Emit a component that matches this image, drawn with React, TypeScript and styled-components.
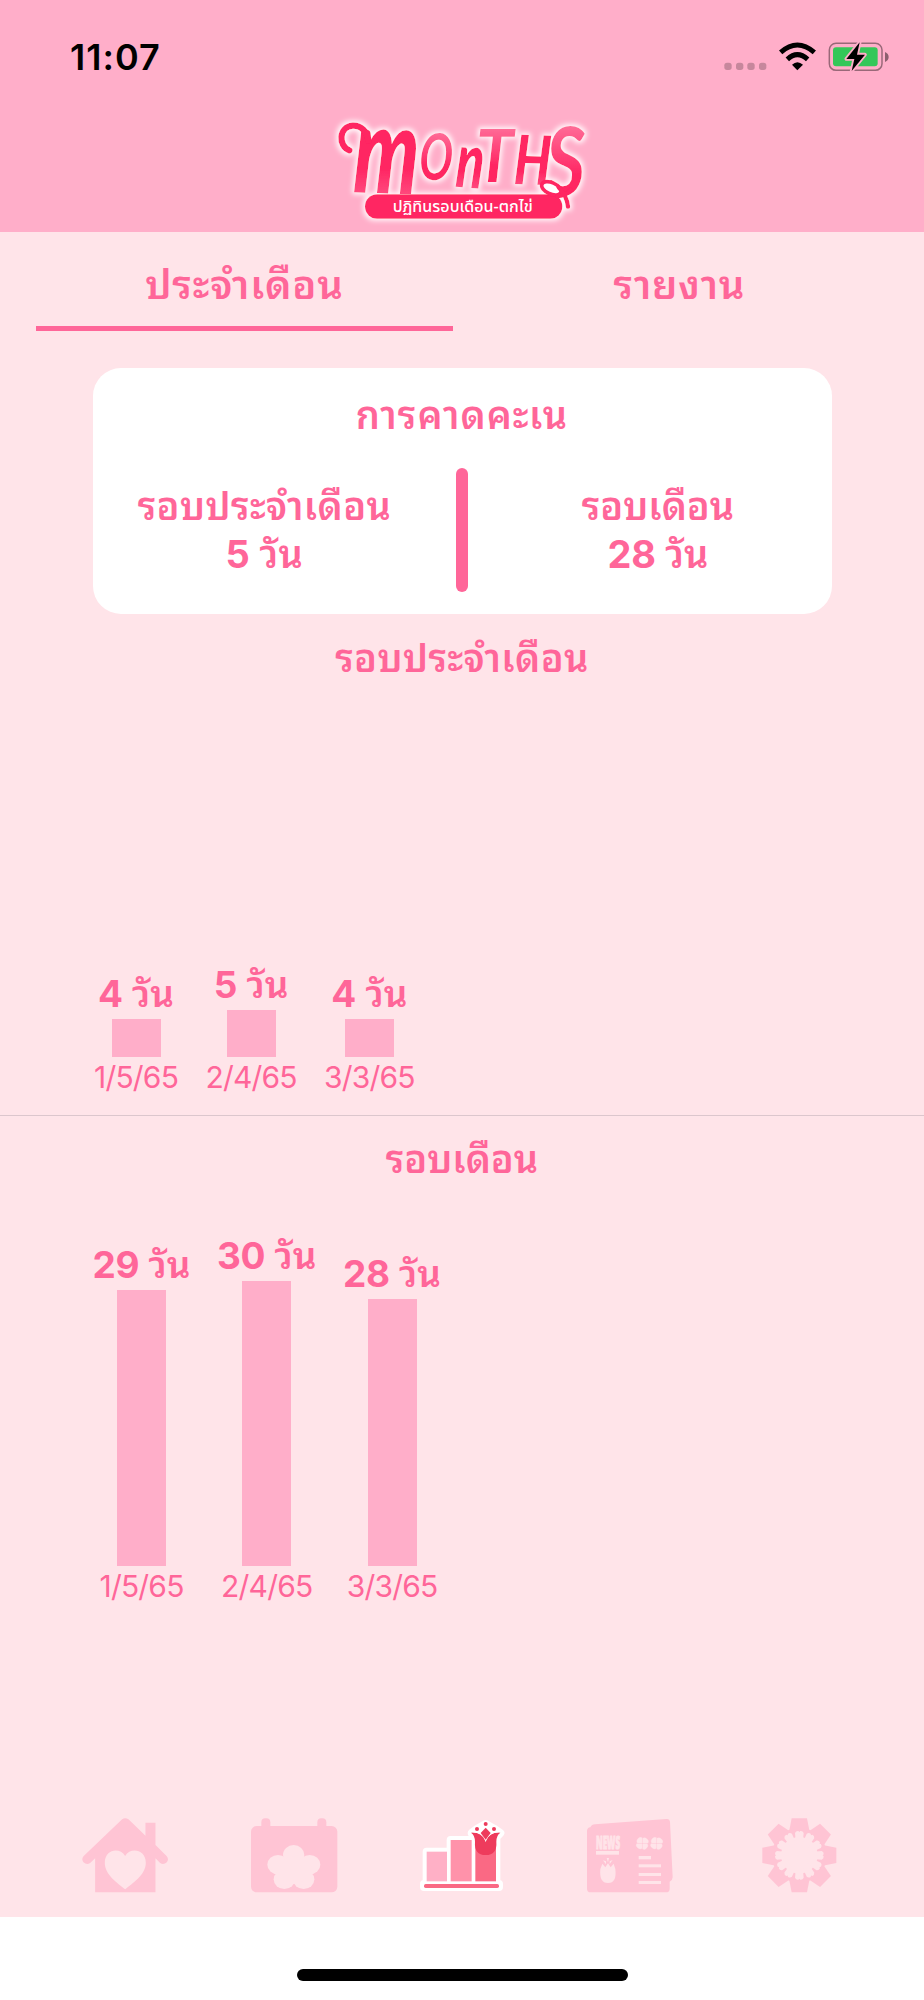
import React from "react";
import styled, { createGlobalStyle } from "styled-components";

const GlobalStyle = createGlobalStyle`
  *, *::before, *::after { box-sizing: border-box; }
  body { margin: 0; background: #fff; }
`;

const rose = "#ff6699";
const blush = "#ffaec9";
const mist = "#ffe4e9";
const muted = "#ffc4d4";

const Screen = styled.div`
  width: 924px;
  height: 2000px;
  display: flex;
  flex-direction: column;
  overflow: hidden;
  background: ${mist};
  color: ${rose};
  font-family: Inter, "Noto Sans Thai Looped", Loma, Garuda, Waree, Sarabun, Umpush, Laksaman, Kinnari, FreeSans, FreeSerif, "Noto Serif Thai", sans-serif;
  font-weight: 600;
`;

const Header = styled.header`
  height: 232px;
  flex: none;
  display: flex;
  flex-direction: column;
  align-items: center;
  background: ${blush};
`;

const StatusBar = styled.div`
  width: 100%;
  height: 110px;
  padding: 35px 35px 0 70px;
  display: flex;
  justify-content: space-between;
  align-items: flex-start;
  color: #000;
`;

const Clock = styled.span`
  font-size: 36px;
  line-height: 44px;
  letter-spacing: 1px;
`;

const Tabs = styled.nav`
  flex: none;
  display: grid;
  grid-template-columns: 1fr 1fr;
  gap: 18px;
  padding: 0 36px;
`;

const Tab = styled.div<{ $active?: boolean }>`
  height: 99px;
  padding-top: 29px;
  border-bottom: 5px solid ${(p) => (p.$active ? rose : "transparent")};
  text-align: center;
  font-size: 40px;
  line-height: 48px;
  letter-spacing: 0.8px;
`;

const Card = styled.section`
  flex: none;
  width: 739px;
  height: 246px;
  margin: 37px 0 0 93px;
  padding: 23px 1px 0 0;
  border-radius: 28px;
  background: #fff;
  text-align: center;
`;

const Title = styled.h2<{ $track?: number }>`
  margin: 0;
  font-size: 38px;
  font-weight: 600;
  line-height: 48px;
  text-align: center;
  letter-spacing: ${(p) => p.$track ?? 0}px;
`;

const Forecast = styled.div`
  margin-top: 29px;
  display: grid;
  grid-template-columns: 1fr 12px 1fr;
  align-items: center;
`;

const Divider = styled.div`
  height: 124px;
  border-radius: 6px;
  background: ${rose};
`;

const Stat = styled.div<{ $side: "left" | "right" }>`
  padding: ${(p) => (p.$side === "left" ? "0 20px 0 0" : "0 0 0 17px")};
  font-size: 38px;
  line-height: 48px;
  letter-spacing: ${(p) => (p.$side === "left" ? 0.4 : 0)}px;
`;

const Digits = styled.b`
  font-weight: 700;
  letter-spacing: -0.3px;
`;

const Section = styled.section<{ $height: number; $top: number; $line?: boolean }>`
  flex: none;
  height: ${(p) => p.$height}px;
  padding-top: ${(p) => p.$top}px;
  display: flex;
  flex-direction: column;
  border-bottom: ${(p) => (p.$line ? "1px solid #dcc6cd" : "none")};
`;

const Chart = styled.div<{ $height: number; $left: number; $gap: number }>`
  height: ${(p) => p.$height}px;
  padding-left: ${(p) => p.$left}px;
  display: flex;
  gap: ${(p) => p.$gap}px;
  align-items: flex-end;
`;

const Column = styled.div`
  display: flex;
  flex-direction: column;
  align-items: center;
  white-space: nowrap;
`;

const Amount = styled.span`
  margin-bottom: 3px;
  font-size: 37px;
  line-height: 44px;
`;

const Bar = styled.div`
  width: 49px;
  background: ${blush};
`;

const DateLabel = styled.span`
  margin-top: 2px;
  font-size: 30px;
  font-weight: 400;
  line-height: 36px;
  letter-spacing: -0.8px;
`;

const Navigation = styled.nav`
  height: 117px;
  margin-top: auto;
  flex: none;
  padding: 0 41px;
  display: grid;
  grid-template-columns: repeat(5, 1fr);
  justify-items: center;
`;

const Footer = styled.footer`
  height: 83px;
  flex: none;
  display: flex;
  justify-content: center;
  padding-top: 52px;
  background: #fff;
`;

const HomeIndicator = styled.div`
  width: 331px;
  height: 12px;
  border-radius: 6px;
  background: #000;
`;

type Entry = { days: number; date: string; height: number };

const periods: Entry[] = [
  { days: 4, date: "1/5/65", height: 38 },
  { days: 5, date: "2/4/65", height: 47 },
  { days: 4, date: "3/3/65", height: 38 },
];

const cycles: Entry[] = [
  { days: 29, date: "1/5/65", height: 276 },
  { days: 30, date: "2/4/65", height: 285 },
  { days: 28, date: "3/3/65", height: 267 },
];

const BarChart = ({ data, height, left, gap }: { data: Entry[]; height: number; left: number; gap: number }) => (
  <Chart $height={height} $left={left} $gap={gap}>
    {data.map((d) => (
      <Column key={d.date}>
        <Amount>
          <Digits>{d.days}</Digits> วัน
        </Amount>
        <Bar style={{ height: d.height }} />
        <DateLabel>{d.date}</DateLabel>
      </Column>
    ))}
  </Chart>
);

const StatusIcons = () => (
  <svg width="167" height="40" viewBox="66 45 501 120">
    <g fill="#000" opacity="0.22">
      {[73, 108, 142, 177].map((x) => (
        <rect key={x} x={x} y="128" width="22" height="22" rx="8" />
      ))}
    </g>
    <g fill="none" stroke="#000" strokeWidth="15">
      <path d="M242 97 Q292 53 343 97" />
      <path d="M262 118 Q292 90 323 118" />
    </g>
    <path d="M276 134 Q292 119 309 134 L292 151Z" />
    <rect x="388" y="70" width="158" height="81" rx="20" fill="none" stroke="#000" strokeOpacity="0.4" strokeWidth="4.5" />
    <path d="M555 96 Q566 101 566 111 Q566 121 555 126Z" opacity="0.45" />
    <rect x="399" y="82" width="134" height="57" rx="9" fill="#34c759" />
    <path d="M479 67 L439 117 H463 L455 153 L495 104 H471Z" stroke={blush} strokeWidth="11" strokeLinejoin="round" />
    <path d="M479 67 L439 117 H463 L455 153 L495 104 H471Z" />
  </svg>
);

const letters = [
  { c: "m", x: 98, y: 247, w: 196, size: 366, weight: 900, fill: "url(#deep)", turn: 2 },
  { c: "O", x: 294, y: 206, w: 100, size: 194, weight: 700, fill: "url(#soft)", turn: 4 },
  { c: "n", x: 404, y: 230, w: 84, size: 232, weight: 900, fill: "url(#deep)", turn: 4 },
  { c: "T", x: 468, y: 215, w: 112, size: 218, weight: 700, fill: "url(#soft)", turn: 0 },
  { c: "H", x: 580, y: 222, w: 112, size: 205, weight: 900, fill: "url(#deep)", turn: 2 },
  { c: "S", x: 676, y: 258, w: 120, size: 288, weight: 700, fill: "url(#soft)", turn: 0 },
];

const Wordmark = () => (
  <>
    {letters.map((l) => (
      <text
        key={l.c}
        x={l.x}
        y={l.y}
        fontSize={l.size}
        fontWeight={l.weight}
        textLength={l.w}
        lengthAdjust="spacingAndGlyphs"
        fill={l.fill}
        transform={`rotate(${l.turn} ${l.x} ${l.y})`}
      >
        {l.c}
      </text>
    ))}
  </>
);

const LogoArt = styled.svg`
  overflow: visible;
  font-family: Lato, sans-serif;
  font-style: italic;
`;

const Tagline = styled.text`
  font-family: "Noto Sans Thai", sans-serif;
  font-style: normal;
  font-weight: 500;
  fill: #fff;
`;

const Logo = () => (
  <LogoArt width="290" height="122" viewBox="-9 0 870 366">
    <defs>
      <linearGradient id="deep" x1="0" y1="0" x2="0" y2="1">
        <stop offset="0.65" stopColor="#ff2562" />
        <stop offset="1" stopColor="#ff6c98" />
      </linearGradient>
      <linearGradient id="soft" x1="0" y1="0" x2="0" y2="1">
        <stop offset="0.15" stopColor="#ff769f" />
        <stop offset="0.65" stopColor="#ff2562" />
      </linearGradient>
      <filter id="glow" x="-10%" y="-20%" width="120%" height="140%">
        <feMorphology operator="dilate" radius="6" />
        <feColorMatrix values="0 0 0 0 1  0 0 0 0 1  0 0 0 0 1  0 0 0 0.9 0" />
        <feGaussianBlur stdDeviation="8" result="halo" />
        <feMerge>
          <feMergeNode in="halo" />
          <feMergeNode in="SourceGraphic" />
        </feMerge>
      </filter>
    </defs>
    <g filter="url(#glow)">
      <Wordmark />
      <path d="M88 121 C54 108 56 50 98 47 C124 46 140 64 146 92" fill="none" stroke="#ff2562" strokeWidth="19" strokeLinecap="round" />
      <rect x="135" y="253" width="592" height="73" rx="36" fill="#ff2562" />
      <g stroke="#ff2562" strokeLinecap="round">
        <ellipse cx="694" cy="235" rx="31" ry="17" transform="rotate(24 694 235)" fill="#fff" strokeWidth="11" />
        <path d="M712 258 Q738 258 752 240 M716 232 Q740 256 744 290" fill="none" strokeWidth="13" />
      </g>
    </g>
    <Tagline x="218" y="306" fontSize="48" textLength="420" lengthAdjust="spacingAndGlyphs">
      ปฏิทินรอบเดือน-ตกไข่
    </Tagline>
  </LogoArt>
);

const HomeIcon = () => (
  <svg width="100" height="117" viewBox="45.6 0 300 351">
    <path
      fill={muted}
      d="M187 58 Q196 51 206 58 L257 107 V68 H287 V135 L321 169 Q328 178 321 187 Q311 196 301 189 L287 175 V277 H106 V175 L91 189 Q81 196 71 187 Q64 178 71 169Z"
    />
    <path fill={mist} d="M196 268 C175 250 135 225 135 188 C135 148 180 140 196 168 C212 140 258 148 258 188 C258 225 217 250 196 268Z" />
  </svg>
);

const CalendarIcon = () => (
  <svg width="100" height="117" viewBox="551 0 300 351">
    <g fill={muted}>
      <rect x="572" y="78" width="259" height="199" rx="17" />
      <rect x="603" y="55" width="27" height="40" rx="12" />
      <rect x="771" y="55" width="27" height="40" rx="12" />
    </g>
    <g fill={mist}>
      <ellipse cx="700" cy="165" rx="32" ry="30" />
      <ellipse cx="653" cy="194" rx="32" ry="29" />
      <ellipse cx="748" cy="194" rx="32" ry="29" />
      <ellipse cx="672" cy="238" rx="32" ry="29" />
      <ellipse cx="730" cy="238" rx="32" ry="29" />
      <circle cx="700" cy="210" r="42" />
    </g>
  </svg>
);

const StatsIcon = () => (
  <svg width="100" height="117" viewBox="36 0 300 351">
    <g fill="#fff" stroke="#fff" strokeWidth="24" strokeLinejoin="round">
      <path d="M80 155 H152 V120 H225 V99 L215 99 L232 86 L257 72 L282 86 L301 99 L289 112 V252 H297 V261 H72 V252 H80Z" />
    </g>
    <rect x="80" y="155" width="61" height="89" fill="#ffb0c6" />
    <rect x="152" y="120" width="63" height="124" fill="#ff92aa" />
    <rect x="226" y="110" width="62" height="134" fill="#fa6984" />
    <rect x="72" y="252" width="225" height="12" rx="5" fill="#fa6984" />
    <path d="M213 98 Q246 96 257 124 Q268 96 301 98 Q289 106 289 125 Q292 165 257 165 Q222 165 225 125 Q225 106 213 98Z" fill="#ee3b5c" />
    <path d="M213 98 Q246 96 257 124 Q268 96 301 98" fill="none" stroke="#fff" strokeWidth="4" transform="translate(0 -3)" />
    <g fill="#ee3b5c">
      <path d="M257 83 L272 99 L257 119 L242 99Z" />
      <circle cx="257" cy="72" r="6" />
      <circle cx="231" cy="87" r="6" />
      <circle cx="282" cy="87" r="6" />
    </g>
  </svg>
);

const Clover = ({ x }: { x: number }) => (
  <g transform={`translate(${x} 130)`} fill={mist}>
    {[0, 90, 180, 270].map((a) => (
      <path key={a} transform={`rotate(${a})`} d="M1 1 H15 Q19 7 14 13 Q8 21 1 17Z" stroke={mist} strokeWidth="1" />
    ))}
  </g>
);

const NewsIcon = () => (
  <svg width="100" height="117" viewBox="31 0 300 351">
    <path
      fill={muted}
      d="M52 92 Q53 83 62 82 Q66 73 76 73 L290 57 Q300 56 301 66 L309 232 Q309 240 300 245 V266 Q300 277 289 277 H63 Q52 277 52 266Z"
    />
    <text x="79" y="147" fontFamily="Open Sans, sans-serif" fontWeight="800" fontSize="54" textLength="72" lengthAdjust="spacingAndGlyphs" fill={mist} stroke={mist} strokeWidth="3">
      NEWS
    </text>
    <g fill={mist}>
      <rect x="79" y="153" width="69" height="11" />
      <path d="M92 207 L98 191 L107 202 L115 190 L123 202 L132 191 L137 207 Q142 249 115 249 Q88 249 92 207Z" />
      <path d="M100 181 L109 184 V193Z M111 174 H118 L115 187Z M129 180 L120 184 V192Z" />
      <rect x="207" y="168" width="37" height="10" />
      <rect x="207" y="193" width="67" height="9" />
      <rect x="207" y="219" width="67" height="9" />
      <rect x="207" y="243" width="67" height="9" />
    </g>
    <Clover x={218} />
    <Clover x={261} />
  </svg>
);

const SettingsIcon = () => (
  <svg width="100" height="117" viewBox="536 0 300 351">
    <g transform="translate(687 166)">
      <g fill={muted}>
        <circle r="82" />
        {[0, 45, 90, 135, 180, 225, 270, 315].map((a) => (
          <path key={a} transform={`rotate(${a})`} d="M-23 -111 H23 L31 -70 H-31Z" />
        ))}
      </g>
      <g fill={mist}>
        <circle r="55" />
        {Array.from({ length: 12 }, (_, i) => (
          <path key={i} transform={`rotate(${i * 30})`} d="M-10 -35 L-13 -67 Q-10 -74 -3 -73 L0 -70 L3 -73 Q10 -74 13 -67 L10 -35Z" />
        ))}
      </g>
    </g>
  </svg>
);

export default function App() {
  return (
    <>
      <GlobalStyle />
      <Screen>
        <Header>
          <StatusBar>
            <Clock>11:07</Clock>
            <StatusIcons />
          </StatusBar>
          <Logo />
        </Header>
        <Tabs>
          <Tab $active>ประจำเดือน</Tab>
          <Tab>รายงาน</Tab>
        </Tabs>
        <Card>
          <Title $track={1}>การคาดคะเน</Title>
          <Forecast>
            <Stat $side="left">
              รอบประจำเดือน
              <br />
              <Digits>5</Digits> วัน
            </Stat>
            <Divider />
            <Stat $side="right">
              รอบเดือน
              <br />
              <Digits>28</Digits> วัน
            </Stat>
          </Forecast>
        </Card>
        <Section $height={502} $top={20} $line>
          <Title $track={0.4}>รอบประจำเดือน</Title>
          <BarChart data={periods} height={413} left={94} gap={27.3} />
        </Section>
        <Section $height={505} $top={19}>
          <Title>รอบเดือน</Title>
          <BarChart data={cycles} height={421} left={92.5} gap={26.4} />
        </Section>
        <Navigation>
          <HomeIcon />
          <CalendarIcon />
          <StatsIcon />
          <NewsIcon />
          <SettingsIcon />
        </Navigation>
        <Footer>
          <HomeIndicator />
        </Footer>
      </Screen>
    </>
  );
}
